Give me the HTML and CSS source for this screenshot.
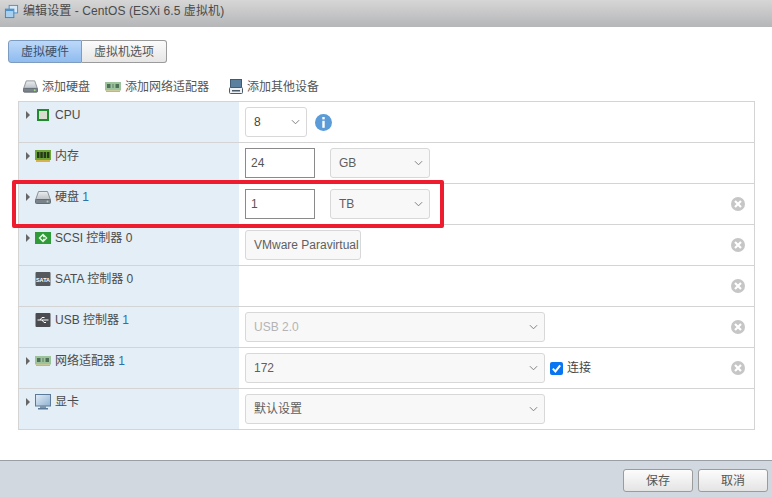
FILE: index.html
```html
<!DOCTYPE html>
<html lang="zh">
<head>
<meta charset="utf-8">
<title>编辑设置</title>
<link rel="stylesheet" href="styles.css">
</head>
<body>
<svg class="defs" width="0" height="0" aria-hidden="true">
  <defs>
    <linearGradient id="diskTop" x1="0" y1="0" x2="0" y2="1"><stop offset="0" stop-color="#eceef0"/><stop offset="1" stop-color="#b8bec4"/></linearGradient>
    <linearGradient id="screen" x1="0" y1="0" x2="1" y2="1"><stop offset="0" stop-color="#e3eef7"/><stop offset="1" stop-color="#8fb2d2"/></linearGradient>
    <symbol id="chev" viewBox="0 0 10 6"><path d="M1 1l4 4 4-4" fill="none" stroke="#808080" stroke-width="1.1"/></symbol>
    <symbol id="arrow" viewBox="0 0 6 10"><path d="M1 1l4 4-4 4z" fill="#666"/></symbol>
    <symbol id="x" viewBox="0 0 14 14"><circle cx="7" cy="7" r="7" fill="#c6c6c6"/><path d="M4 4l6 6M10 4l-6 6" stroke="#fff" stroke-width="2.2"/></symbol>
    <symbol id="disk" viewBox="0 0 16 13"><path d="M3.5 0.5h9l3 8.5H0.5z" fill="url(#diskTop)" stroke="#8b9298"/><rect x="0.5" y="8.5" width="15" height="4" rx="1" fill="#7a838b" stroke="#636b73"/><circle cx="12.5" cy="10.5" r="1" fill="#a4dc82"/></symbol>
    <symbol id="nic" viewBox="0 0 16 10"><rect y="0" width="16" height="8.5" fill="#9dc39c"/><rect x="2" y="2" width="3.5" height="4" fill="#4f7058"/><rect x="7" y="2" width="2" height="4" fill="#7c9f80"/><rect x="10.5" y="2" width="3.5" height="4" fill="#4f7058"/><rect x="1" y="8.5" width="14" height="1.5" fill="#c9b66a"/></symbol>
  </defs>
</svg>
<header class="titlebar">
  <svg class="title-icon" width="15" height="15" viewBox="0 0 16 16"><rect x="5.5" y="1.5" width="9" height="8" fill="#d7e8f6" stroke="#4e90c8"/><rect x="1.5" y="5.5" width="9" height="9" fill="#a9cfee" stroke="#3d82bd"/><rect x="1.5" y="5.5" width="9" height="2" fill="#4e90c8"/></svg>
  <span class="title-text">编辑设置 - CentOS (ESXi 6.5 虚拟机)</span>
</header>
<main class="content">
  <div class="tabs">
    <span class="tab tab-active">虚拟硬件</span><span class="tab">虚拟机选项</span>
  </div>
  <div class="toolbar">
    <span class="tool"><svg width="15" height="13"><use href="#disk"/></svg>添加硬盘</span>
    <span class="tool"><svg width="16" height="10"><use href="#nic"/></svg>添加网络适配器</span>
    <span class="tool tool-last"><svg width="14" height="15" viewBox="0 0 14 15"><rect x="1.5" y="0.5" width="11" height="8" fill="#5b7f9e" stroke="#3f5a72"/><rect x="0.5" y="8.5" width="13" height="6" rx="1" fill="#eef1f4" stroke="#4a5a68"/><rect x="3" y="11" width="8" height="1.5" fill="#4a5a68"/></svg>添加其他设备</span>
  </div>
  <section class="table">
    <div class="row">
      <div class="label"><div class="head"><svg class="arrow" width="6" height="10"><use href="#arrow"/></svg>
        <svg class="ico" width="16" height="14" viewBox="0 0 16 14"><rect x="2" y="1" width="12" height="12" fill="#1f8a2e"/><rect x="4" y="3" width="8" height="8" fill="#d8ddd0"/></svg><span>CPU</span></div></div>
      <div class="cell">
        <div class="select s62">8<svg class="chev"><use href="#chev"/></svg></div>
        <svg class="info" width="17" height="17" viewBox="0 0 17 17"><circle cx="8.5" cy="8.5" r="8.5" fill="#5a9bd8"/><rect x="7.3" y="3" width="2.4" height="2.4" fill="#fff"/><rect x="7.3" y="6.8" width="2.4" height="7" fill="#fff"/></svg>
      </div>
    </div>
    <div class="row">
      <div class="label"><div class="head"><svg class="arrow" width="6" height="10"><use href="#arrow"/></svg>
        <svg class="ico" width="16" height="12" viewBox="0 0 16 12"><rect y="0" width="16" height="10" fill="#6ea537"/><rect x="2" y="2" width="2.5" height="6" fill="#243a1a"/><rect x="5.3" y="2" width="2.5" height="6" fill="#243a1a"/><rect x="8.6" y="2" width="2.5" height="6" fill="#243a1a"/><rect x="11.9" y="2" width="2.5" height="6" fill="#243a1a"/><rect x="1" y="10" width="14" height="2" fill="#d8b24a"/></svg><span>内存</span></div></div>
      <div class="cell">
        <div class="input">24</div>
        <div class="select s100 muted">GB<svg class="chev"><use href="#chev"/></svg></div>
      </div>
    </div>
    <div class="row">
      <div class="label"><div class="head"><svg class="arrow" width="6" height="10"><use href="#arrow"/></svg>
        <svg class="ico" width="16" height="13"><use href="#disk"/></svg><span>硬盘 <b class="num">1</b></span></div></div>
      <div class="cell">
        <div class="input">1</div>
        <div class="select s100 muted">TB<svg class="chev"><use href="#chev"/></svg></div>
        <svg class="remove" width="14" height="14"><use href="#x"/></svg>
      </div>
    </div>
    <div class="row">
      <div class="label"><div class="head"><svg class="arrow" width="6" height="10"><use href="#arrow"/></svg>
        <svg class="ico" width="16" height="12" viewBox="0 0 16 12"><rect width="16" height="12" fill="#2e9a38"/><path d="M8 1.5L12.5 6 8 10.5 3.5 6z" fill="#e9f5e6"/><path d="M5.5 6L8 3.8v1.4h2.5v1.6H8v1.4z" fill="#2e9a38"/></svg><span>SCSI 控制器 0</span></div></div>
      <div class="cell">
        <div class="select s116 muted">VMware Paravirtual</div>
        <svg class="remove" width="14" height="14"><use href="#x"/></svg>
      </div>
    </div>
    <div class="row">
      <div class="label no-arrow"><div class="head">
        <svg class="ico" width="16" height="14" viewBox="0 0 16 14"><rect x="0.5" width="15" height="14" rx="1" fill="#55585c"/><text x="8" y="9.5" class="sata">SATA</text></svg><span>SATA 控制器 0</span></div></div>
      <div class="cell">
        <svg class="remove" width="14" height="14"><use href="#x"/></svg>
      </div>
    </div>
    <div class="row">
      <div class="label no-arrow"><div class="head">
        <svg class="ico" width="16" height="14" viewBox="0 0 16 14"><rect x="0.5" width="15" height="14" rx="1" fill="#4a4c50"/><path d="M2.5 7h11M5 7l2-2.5h2.5M7 7l2 2.5h2" fill="none" stroke="#fff"/></svg><span>USB 控制器 <b class="num">1</b></span></div></div>
      <div class="cell">
        <div class="select s300 disabled">USB 2.0<svg class="chev"><use href="#chev"/></svg></div>
        <svg class="remove" width="14" height="14"><use href="#x"/></svg>
      </div>
    </div>
    <div class="row">
      <div class="label"><div class="head"><svg class="arrow" width="6" height="10"><use href="#arrow"/></svg>
        <svg class="ico" width="16" height="10"><use href="#nic"/></svg><span>网络适配器 <b class="num">1</b></span></div></div>
      <div class="cell">
        <div class="select s300 muted">172<svg class="chev"><use href="#chev"/></svg></div>
        <svg class="check" width="13" height="13" viewBox="0 0 13 13"><rect width="13" height="13" rx="2" fill="#0a75f0"/><path d="M2.8 6.6l2.6 2.8 4.8-6" fill="none" stroke="#fff" stroke-width="2"/></svg>
        <span class="check-label">连接</span>
        <svg class="remove" width="14" height="14"><use href="#x"/></svg>
      </div>
    </div>
    <div class="row">
      <div class="label"><div class="head"><svg class="arrow" width="6" height="10"><use href="#arrow"/></svg>
        <svg class="ico" width="16" height="16" viewBox="0 0 16 16"><rect x="0.5" y="0.5" width="15" height="11.5" fill="url(#screen)" stroke="#5b7a9a"/><rect x="5" y="12" width="6" height="2" fill="#7f95aa"/><rect x="3" y="14" width="10" height="1.5" fill="#5b7a9a"/></svg><span>显卡</span></div></div>
      <div class="cell">
        <div class="select s300 muted">默认设置<svg class="chev"><use href="#chev"/></svg></div>
      </div>
    </div>
  </section>
</main>
<footer class="footer">
  <span class="btn">保存</span><span class="btn">取消</span>
</footer>
<div class="highlight"></div>
</body>
</html>
```
FILE: styles.css
```css
* { box-sizing: border-box; }
html, body { height: 100%; }
body {
  margin: 0;
  width: 772px;
  height: 497px;
  position: relative;
  overflow: hidden;
  display: flex;
  flex-direction: column;
  background: #fff;
  color: #444;
  font: 12px/14px "Liberation Sans", "Noto Sans CJK SC", sans-serif;
}
.defs { position: absolute; }
.titlebar {
  height: 27px;
  flex: none;
  display: flex;
  align-items: center;
  gap: 4px;
  padding: 0 0 5px 4px;
  background: linear-gradient(#d6d6d6, #b5b6b8);
}
.title-text { font-size: 12px; color: #4a4a4a; letter-spacing: 0.09px; }
.content { flex: 1; padding: 13px 17px 0 8px; }
.tabs { display: flex; height: 23px; }
.tab {
  display: flex;
  align-items: center;
  justify-content: center;
  width: 85px;
  border: 1px solid #9b9b9b;
  border-left: 0;
  border-radius: 0 3px 3px 0;
  background: linear-gradient(#fbfbfb, #e6e6e6);
  color: #555;
}
.tab-active {
  width: 74px;
  border: 1px solid #7e9cc0;
  border-radius: 3px 0 0 3px;
  background: linear-gradient(#bcd8f8, #8fbcf0);
  color: #39506b;
}
.toolbar {
  display: flex;
  align-items: center;
  height: 38px;
  padding: 9px 0 0 15px;
  color: #555;
}
.tool { display: flex; align-items: center; gap: 4px; margin-right: 14px; }
.tool:first-child { margin-right: 15px; }
.tool-last { margin-left: 6px; }
.table {
  margin-left: 10px;
  border: 1px solid #d4d4d4;
  border-width: 1px 1px 0;
}
.row {
  display: flex;
  height: 41px;
  border-bottom: 1px solid #d4d4d4;
}
.label {
  width: 220px;
  flex: none;
  padding: 5px 0 0 6px;
  background: #e3eef6;
  color: #4b4b4b;
}
.head { display: flex; align-items: center; height: 16px; }
.no-arrow { padding-left: 16px; }
.arrow { margin-right: 4px; flex: none; }
.ico { margin-right: 4px; flex: none; }
.num { font-weight: 400; color: #2f6fa8; }
.sata { font: 700 5.5px "Liberation Sans", sans-serif; fill: #fff; text-anchor: middle; }
.cell {
  flex: 1;
  display: flex;
  align-items: center;
  padding: 0 9px 0 6px;
}
.select {
  height: 30px;
  display: flex;
  align-items: center;
  justify-content: space-between;
  padding: 0 6px 0 8px;
  border: 1px solid #d8d8d8;
  border-radius: 3px;
  background: #fff;
  color: #444;
  white-space: nowrap;
}
.muted { background: #f8f8f8; color: #5f5f5f; }
.disabled { background: #f8f8f8; color: #b4b4b4; }
.s62 { width: 62px; }
.s100 { width: 100px; margin-left: 15px; }
.s116 { width: 116px; overflow: hidden; justify-content: flex-start; padding: 0 0 0 8px; }
.s300 { width: 300px; }
.chev { flex: none; width: 9px; height: 6px; }
.input {
  width: 70px;
  height: 30px;
  display: flex;
  align-items: center;
  padding-left: 5px;
  border: 1px solid #8a8a8a;
  background: #fff;
  color: #555;
}
.info { margin-left: 8px; }
.remove { margin-left: auto; }
.check { margin-left: 5px; }
.check-label { margin-left: 4px; color: #444; }
.footer {
  height: 37px;
  flex: none;
  display: flex;
  justify-content: flex-end;
  align-items: flex-start;
  gap: 5px;
  padding: 8px 4px 0 0;
  background: #d1d8e0;
  border-top: 1px solid #9a9fa5;
}
.btn {
  width: 70px;
  height: 23px;
  display: flex;
  align-items: center;
  justify-content: center;
  border: 1px solid #9b9b9b;
  border-radius: 3px;
  background: linear-gradient(#fcfcfc, #e4e4e4);
  color: #555;
}
.highlight {
  position: absolute;
  left: 12px;
  top: 180px;
  width: 432px;
  height: 48px;
  border: 4px solid #ed1c2e;
  border-radius: 2px;
}
```
